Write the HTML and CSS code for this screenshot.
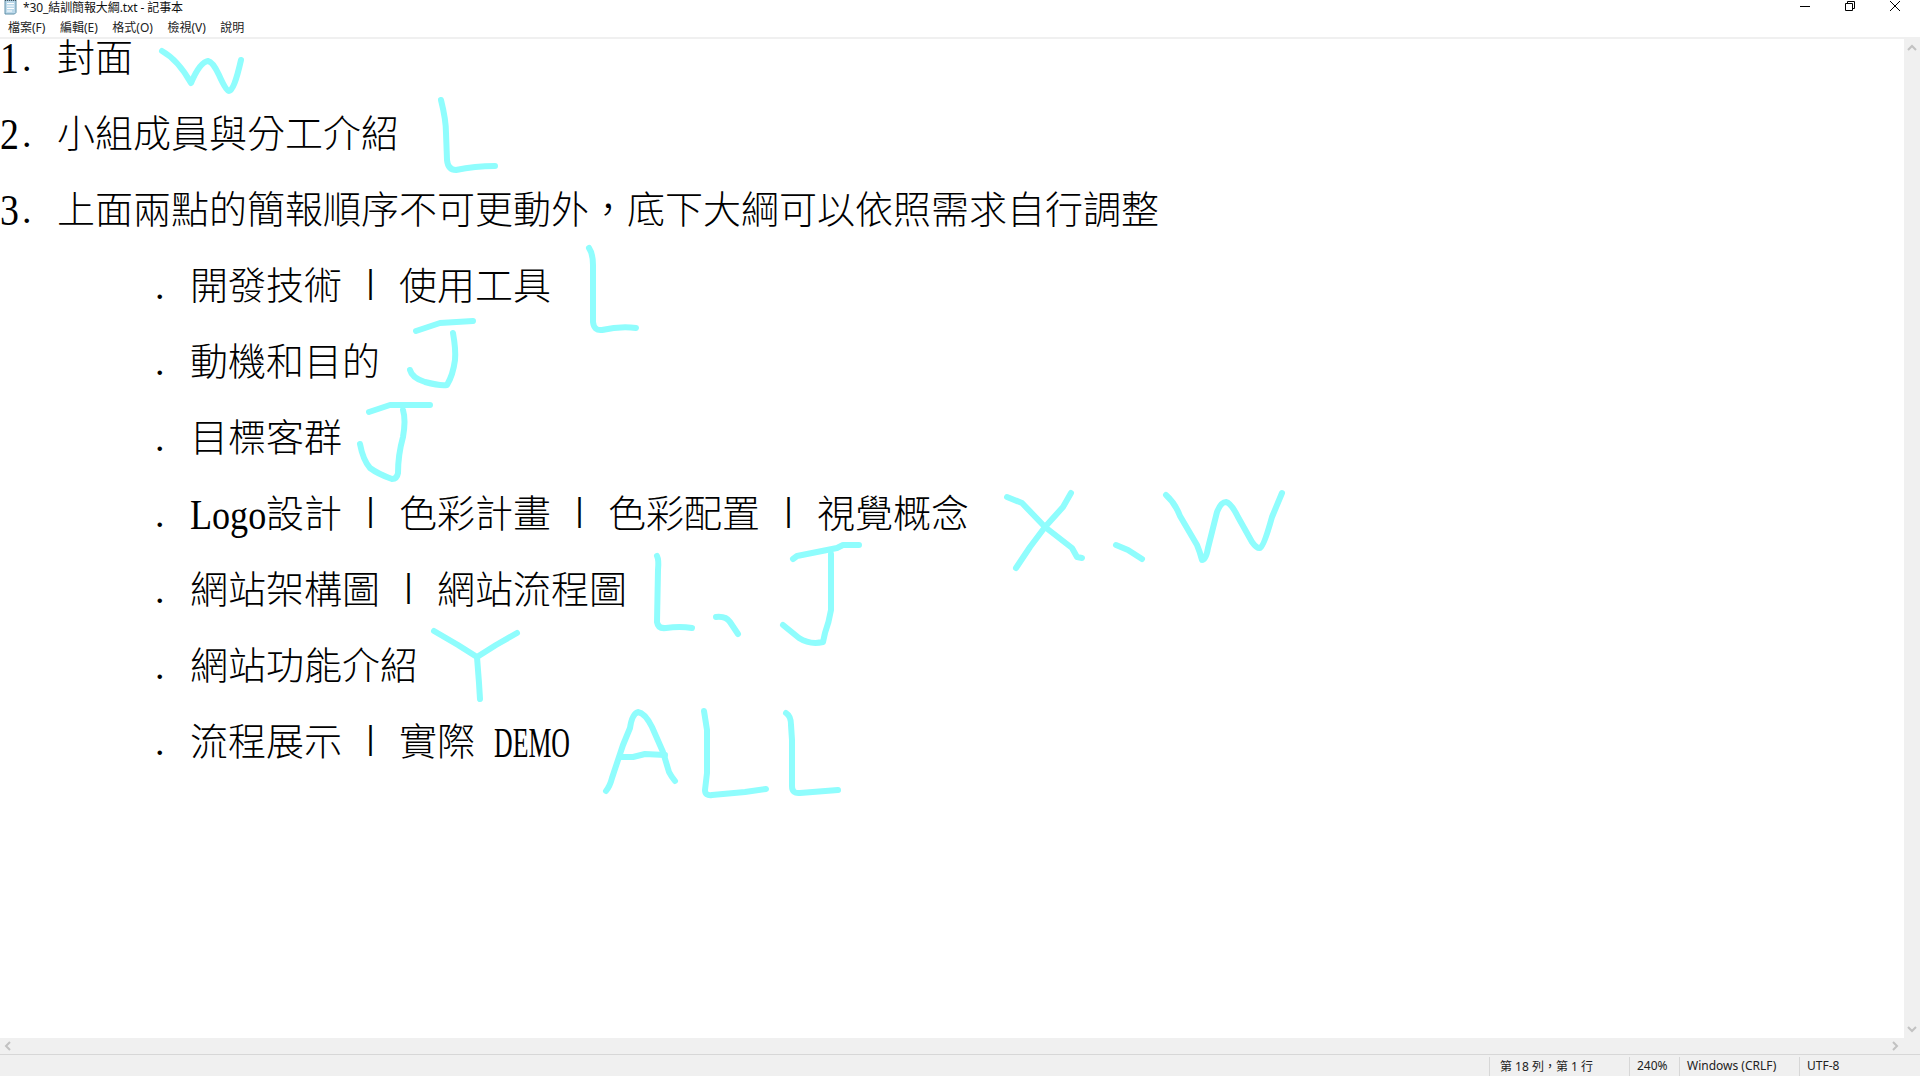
FILE: index.html
```html
<!DOCTYPE html>
<html lang="zh-Hant">
<head>
  <meta charset="UTF-8" />
  <title>*30_結訓簡報大綱.txt - 記事本</title>
  <link rel="stylesheet" href="styles.css">
</head>
<body>
  <div class="window">
    <header class="titlebar">
      <svg class="app-icon" width="16" height="16" viewBox="0 0 16 16">
        <path d="M3 1h11v12.5l-1.5 1.5H3z" fill="#bcd9ea" stroke="#5f8fa8" stroke-width="1" />
        <path d="M5 4.5h7M5 7h7M5 9.500h7M5 12h5" stroke="#fff" stroke-width="1" />
        <path d="M3.500 0v2M5.500 0v2M7.500 0v2M9.500 0v2M11.500 0v2M13.500 0v2" stroke="#44545e" stroke-width="1" />
      </svg>
      <span class="title-text">*30_結訓簡報大綱.txt - 記事本</span>
      <div class="controls">
        <svg width="10" height="10" viewBox="0 0 10 10"><path d="M0 5.500h10" stroke="#000" /></svg>
        <svg width="10" height="10" viewBox="0 0 10 10" fill="none" stroke="#000"><path d="M.5 2.500h7v7h-7zM2.500 2.500v-2h7v7h-2" /></svg>
        <svg width="10" height="10" viewBox="0 0 10 10" stroke="#000"><path d="M0 0l10 10M10 0L0 10" /></svg>
      </div>
    </header>

    <nav class="menubar">
      <span>檔案(F)</span>
      <span>編輯(E)</span>
      <span>格式(O)</span>
      <span>檢視(V)</span>
      <span>說明</span>
    </nav>

    <div class="editor">
      <main class="doc">
        <p class="line"><span class="num">1</span><span class="dot">.</span>封面</p>
        <p class="line"><span class="num">2</span><span class="dot">.</span>小組成員與分工介紹</p>
        <p class="line"><span class="num">3</span><span class="dot">.</span>上面兩點的簡報順序不可更動外，底下大綱可以依照需求自行調整</p>
        <p class="line sub"><span class="dot">.</span>開發技術<span class="sep">|</span>使用工具</p>
        <p class="line sub"><span class="dot">.</span>動機和目的</p>
        <p class="line sub"><span class="dot">.</span>目標客群</p>
        <p class="line sub"><span class="dot">.</span><span class="logo">Logo</span>設計<span class="sep">|</span>色彩計畫<span class="sep">|</span>色彩配置<span class="sep">|</span>視覺概念</p>
        <p class="line sub"><span class="dot">.</span>網站架構圖<span class="sep">|</span>網站流程圖</p>
        <p class="line sub"><span class="dot">.</span>網站功能介紹</p>
        <p class="line sub"><span class="dot">.</span>流程展示<span class="sep">|</span>實際<span class="gap"></span><span class="demo">DEMO</span></p>
      </main>
      <div class="vscroll">
        <svg width="10" height="8" viewBox="0 0 10 8"><path d="M1 6l4-4 4 4" /></svg>
        <svg width="10" height="8" viewBox="0 0 10 8"><path d="M1 2l4 4 4-4" /></svg>
      </div>
    </div>

    <div class="hscroll">
      <svg width="8" height="10" viewBox="0 0 8 10"><path d="M6 1L2 5l4 4" /></svg>
      <svg width="8" height="10" viewBox="0 0 8 10"><path d="M2 1l4 4-4 4" /></svg>
    </div>

    <footer class="statusbar">
      <span class="cell cell-pos">第 18 列，第 1 行</span>
      <span class="cell cell-zoom">240%</span>
      <span class="cell cell-eol">Windows (CRLF)</span>
      <span class="cell cell-enc">UTF-8</span>
    </footer>

    <!-- pen strokes drawn on top of the screen -->
    <svg class="ink" width="1920" height="1076" viewBox="0 0 1920 1076">
      <path d="M162 51Q178 60 191 83Q200 62 208 61Q213 62 219 75Q226 91 229 91Q234 91 241 60" />
      <path d="M441 100Q446 120 446 133L447 160Q448 170 456 170Q475 166 495 166" />
      <path d="M589 248Q593 254 593 265L593 322Q594 331 602 330Q620 326 636 328" />
      <path d="M416 331L440 323L473 321" />
      <path d="M453 333Q456 350 455 360Q453 375 447 385Q440 386 425 382Q412 378 410 370" />
      <path d="M369 412L390 405L430 405" />
      <path d="M403 410Q406 420 403 437Q398 455 398 473Q397 479 392 479Q378 474 370 468Q363 460 360 444" />
      <path d="M1007 497L1022 503L1045 527L1072 548L1077 557L1082 558" />
      <path d="M1071 493L1063 507L1045 527L1030 547L1016 568" />
      <path d="M1116 545L1128 550L1142 559" />
      <path d="M1166 495Q1175 503 1180 516L1197 545Q1200 552 1202 560Q1206 560 1208 548L1217 512Q1221 502 1226 502Q1231 503 1238 517L1252 542Q1257 549 1260 548Q1264 546 1272 517L1282 493" />
      <path d="M657 556Q659 560 658 570L657 622Q658 629 666 628Q680 626 692 628" />
      <path d="M716 617Q726 616 730 622L738 634" />
      <path d="M793 559L797 556L837 548L843 545L859 545" />
      <path d="M831 554L831 610Q829 622 825 633L823 642Q810 645 799 638L783 625" />
      <path d="M434 631L458 645L477 657L496 645L517 633" />
      <path d="M477 657L479 683L480 699" />
      <path d="M606 791Q610 786 612 778L623 745L630 728Q632 714 638 712Q645 713 652 727L663 752L669 772Q671 776 675 781" />
      <path d="M621 757L633 757L645 754L665 755" />
      <path d="M704 711L707 730L707 773L705 790Q705 796 712 795L745 792L766 789" />
      <path d="M786 713Q791 716 791 725L792 740L792 786Q792 794 800 793L838 790" />
    </svg>
  </div>
</body>
</html>
```

FILE: styles.css
```css
* {
  box-sizing: border-box;
}
body {
  margin: 0;
  background: #fff;
  color: #000;
  font-family: "Noto Sans", "Noto Sans CJK TC", sans-serif;
  font-size: 12px;
}
.window {
  position: relative;
  display: flex;
  flex-direction: column;
  height: 100vh;
  overflow: hidden;
}
.titlebar {
  display: flex;
  align-items: center;
  height: 15px;
  padding-left: 2px;
}
.app-icon {
  margin-right: 5px;
  margin-top: -2px;
}
.title-text {
  flex: 1;
  color: #111;
  letter-spacing: -0.1px;
  line-height: 15px;
  white-space: nowrap;
}
.controls {
  display: flex;
  align-items: center;
  gap: 35px;
  padding-right: 20px;
  padding-bottom: 3px;
}
.controls svg {
  display: block;
}
.menubar {
  display: flex;
  align-items: center;
  gap: 14.5px;
  height: 22px;
  padding: 4px 0 0 8px;
  color: #222;
  line-height: 16px;
}
.editor {
  flex: 1;
  display: flex;
  min-height: 0;
  border-top: 2px solid #f0f0f0;
}
.doc {
  flex: 1;
  display: flex;
  flex-direction: column;
  gap: 38px;
  font-family: "Liberation Serif", "Noto Sans CJK TC", serif;
  font-size: 38px;
  font-weight: 300;
  line-height: 38px;
}
.line {
  height: 38px;
  margin: 0;
  white-space: pre;
}
.sub {
  padding-left: 152px;
}
.dot {
  display: inline-block;
  width: 38px;
  padding-left: 3px;
}
.sep {
  display: inline-block;
  width: 57px;
  font-size: 34px;
  font-weight: 700;
  line-height: 0;
  text-align: center;
  vertical-align: 6px;
}
.gap {
  display: inline-block;
  width: 19px;
}
/* half-width latin: squeezed into the 19px cell of the notepad font */
.num,
.logo,
.demo {
  display: inline-block;
  line-height: 0;
  vertical-align: -2px;
  transform-origin: left center;
}
.num {
  width: 19px;
  font-size: 44px;
  transform: scaleX(0.86);
}
.logo,
.demo {
  width: 76px;
  font-size: 43px;
}
.logo {
  transform: scaleX(0.84);
}
.demo {
  transform: scaleX(0.6);
}
.vscroll {
  display: flex;
  flex-direction: column;
  justify-content: space-between;
  align-items: center;
  width: 16px;
  padding: 5px 0;
  background: #f0f0f0;
}
.hscroll {
  display: flex;
  justify-content: space-between;
  align-items: center;
  height: 16px;
  padding: 0 21px 0 4px;
  background: #f0f0f0;
}
.vscroll svg,
.hscroll svg {
  fill: none;
  stroke: #c2c2c2;
  stroke-width: 2;
}
.statusbar {
  display: flex;
  justify-content: flex-end;
  height: 22px;
  padding-top: 2px;
  background: #f0f0f0;
  border-top: 1px solid #d7d7d7;
  color: #222;
}
.cell {
  display: flex;
  align-items: center;
  padding: 0 0 2px 7px;
  border-left: 1px solid #d7d7d7;
  white-space: pre;
}
.cell-pos {
  width: 140px;
  padding-left: 10px;
}
.cell-zoom {
  width: 50px;
}
.cell-eol {
  width: 120px;
}
.cell-enc {
  width: 121px;
}
.ink {
  position: absolute;
  top: 0;
  left: 0;
  pointer-events: none;
  fill: none;
  stroke: #8ffdfd;
  stroke-width: 6;
  stroke-linecap: round;
  stroke-linejoin: round;
}
```
